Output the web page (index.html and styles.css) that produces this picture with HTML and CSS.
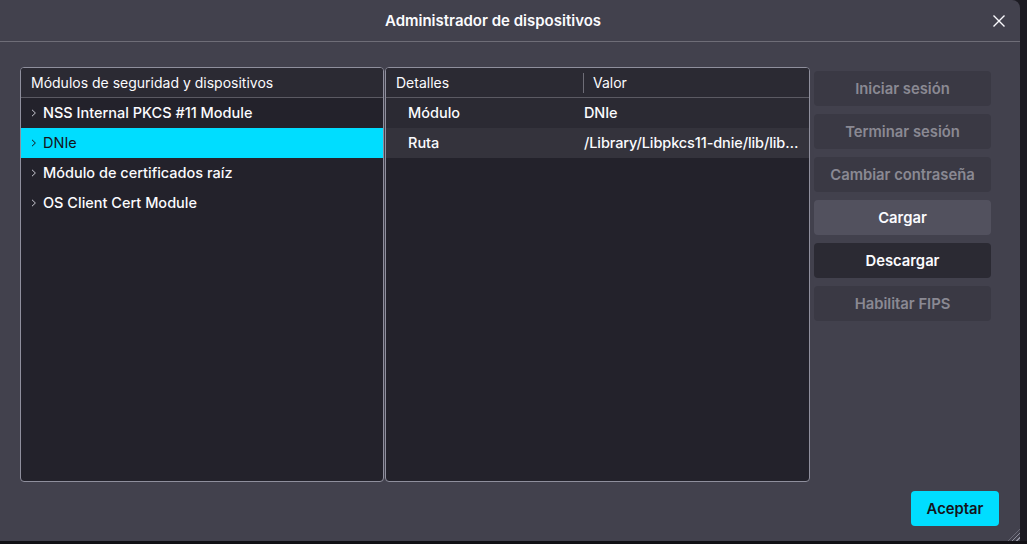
FILE: index.html
```html
<!DOCTYPE html>
<html lang="es">
<head>
    <meta charset="UTF-8">
    <title>Administrador de dispositivos</title>
    <link rel="stylesheet" href="styles.css">
</head>
<body>
    <div class="dialog">
        <div class="titlebar">
            <h1>Administrador de dispositivos</h1>
            <button class="close-btn" aria-label="Cerrar">
                <svg width="14" height="14" viewBox="0 0 14 14"><path d="M1.5 1.5 L12.5 12.5 M12.5 1.5 L1.5 12.5" stroke="#fbfbfe" stroke-width="1.4" fill="none"/></svg>
            </button>
        </div>

        <div class="content">
            <div class="panel tree">
                <div class="panel-head">Módulos de seguridad y dispositivos</div>
                <div class="tree-row"><span class="twisty"></span>NSS Internal PKCS #11 Module</div>
                <div class="tree-row selected"><span class="twisty"></span>DNIe</div>
                <div class="tree-row"><span class="twisty"></span>Módulo de certificados raíz</div>
                <div class="tree-row"><span class="twisty"></span>OS Client Cert Module</div>
            </div>

            <div class="panel details">
                <div class="panel-head cols">
                    <div class="col-name">Detalles</div>
                    <div class="col-value">Valor</div>
                </div>
                <div class="detail-row">
                    <div class="col-name">Módulo</div>
                    <div class="col-value">DNIe</div>
                </div>
                <div class="detail-row alt">
                    <div class="col-name">Ruta</div>
                    <div class="col-value">/Library/Libpkcs11-dnie/lib/libpkcs11-dnie.so</div>
                </div>
            </div>

            <div class="actions">
                <button class="btn" disabled>Iniciar sesión</button>
                <button class="btn" disabled>Terminar sesión</button>
                <button class="btn" disabled>Cambiar contraseña</button>
                <button class="btn hover">Cargar</button>
                <button class="btn dark">Descargar</button>
                <button class="btn" disabled>Habilitar FIPS</button>
            </div>
        </div>

        <div class="footer">
            <button class="primary-btn">Aceptar</button>
            <span class="grip"></span>
        </div>
    </div>
    <div class="under"></div>
</body>
</html>
```

FILE: styles.css
```css
* {
    margin: 0;
    padding: 0;
    box-sizing: border-box;
}

body {
    background: #1c1b22;
    font-family: Inter, "Noto Sans", sans-serif;
    font-size: 14px;
    color: #fbfbfe;
    width: 1027px;
    height: 544px;
    overflow: hidden;
}

.dialog {
    width: 1020px;
    height: 541px;
    background: #42414d;
    border-top-right-radius: 8px;
    display: flex;
    flex-direction: column;
    position: relative;
}

.titlebar {
    height: 42px;
    border-bottom: 1px solid #6e6d77;
    display: flex;
    align-items: center;
    justify-content: center;
    position: relative;
}

.titlebar h1 {
    font-size: 15px;
    font-weight: 600;
    margin-left: -34px;
}

.close-btn {
    position: absolute;
    right: 14px;
    top: 14px;
    background: none;
    border: none;
    width: 14px;
    height: 14px;
    display: flex;
}

.content {
    display: flex;
    align-items: flex-start;
    padding: 25px 0 0 20px;
}

.panel {
    height: 415px;
    background: #23222b;
    border: 1px solid #8f8f9d;
    border-radius: 4px;
    overflow: hidden;
}

.tree {
    width: 364px;
}

.details {
    width: 425px;
    margin-left: 1px;
}

.panel-head {
    height: 30px;
    background: #2b2a33;
    border-bottom: 1px solid #5b5a63;
    display: flex;
    align-items: center;
    padding-left: 10px;
    font-size: 14px;
}

.tree-row {
    height: 30px;
    display: flex;
    align-items: center;
    padding-left: 10px;
    padding-bottom: 1px;
    font-size: 14.5px;
    font-weight: 500;
}

.tree-row.selected {
    background: #00ddff;
    color: #15141a;
    font-weight: 400;
}

.twisty {
    width: 6px;
    height: 8px;
    margin-right: 6px;
    margin-top: 1px;
    background: no-repeat center / 6px 8px url('data:image/svg+xml,%3Csvg xmlns="http://www.w3.org/2000/svg" viewBox="0 0 6 8"%3E%3Cpath d="M1 0.8 L4.4 4 L1 7.2" fill="none" stroke="%23c8c8d0" stroke-width="1"/%3E%3C/svg%3E');
}

.selected .twisty {
    background-image: url('data:image/svg+xml,%3Csvg xmlns="http://www.w3.org/2000/svg" viewBox="0 0 6 8"%3E%3Cpath d="M1 0.8 L4.4 4 L1 7.2" fill="none" stroke="%2315141a" stroke-width="1"/%3E%3C/svg%3E');
}

.cols {
    padding-left: 0;
}

.col-name {
    width: 197px;
    flex: none;
    padding-left: 10px;
}

.col-value {
    flex: 1;
    padding-left: 9px;
    white-space: nowrap;
    overflow: hidden;
    text-overflow: ellipsis;
}

.cols .col-value {
    border-left: 1px solid #6e6d77;
    height: 20px;
    line-height: 20px;
}

.detail-row {
    height: 30px;
    display: flex;
    align-items: center;
    padding-bottom: 1px;
    background: #2b2a33;
    font-size: 14.5px;
    font-weight: 500;
}

.detail-row .col-name {
    padding-left: 22px;
}

.detail-row .col-value {
    padding: 0 9px 0 1px;
    letter-spacing: -0.1px;
}

.detail-row.alt {
    background: #34333c;
}

.actions {
    display: flex;
    flex-direction: column;
    gap: 8px;
    margin: 4px 0 0 4px;
    width: 177px;
}

.btn {
    height: 35px;
    border: none;
    border-radius: 4px;
    background: #3a3944;
    color: #fbfbfe;
    font-family: Inter, "Noto Sans", sans-serif;
    font-size: 14.8px;
    font-weight: 600;
    white-space: nowrap;
}

.btn:disabled {
    color: #8a8993;
}

.btn.hover {
    background: #52515e;
}

.btn.dark {
    background: #2b2a33;
}

.footer {
    flex: 1;
    display: flex;
    justify-content: flex-end;
    padding: 9px 21px 0 0;
    position: relative;
}

.primary-btn {
    width: 88px;
    height: 35px;
    border: none;
    border-radius: 4px;
    background: #00ddff;
    color: #15141a;
    font-family: Inter, "Noto Sans", sans-serif;
    font-size: 14.8px;
    font-weight: 600;
}

.grip {
    position: absolute;
    right: 0;
    bottom: 0;
    width: 12px;
    height: 12px;
    background: repeating-linear-gradient(135deg, transparent 0 2px, #8f8f9d 2px 3px);
    clip-path: polygon(100% 0, 100% 100%, 0 100%);
}

.under {
    height: 3px;
    background: #111015;
}
```
